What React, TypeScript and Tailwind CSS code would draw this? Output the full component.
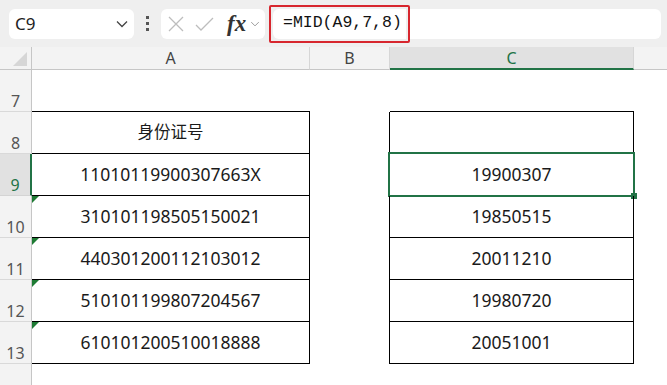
import type { ReactNode } from "react";

const ids = [
  "11010119900307663X",
  "310101198505150021",
  "440301200112103012",
  "510101199807204567",
  "610101200510018888",
];
const dates = ["19900307", "19850515", "20011210", "19980720", "20051001"];

const font = "font-['Noto_Sans','Noto_Sans_CJK_SC',sans-serif]";

function Chevron({ className }: { className?: string }) {
  return (
    <svg width="12" height="8" viewBox="0 0 12 8" className={className}>
      <polyline points="1,1.5 6,6.5 11,1.5" fill="none" stroke="currentColor" strokeWidth="1.3" />
    </svg>
  );
}

function RowHead({ n, active }: { n: number; active?: boolean }) {
  return (
    <div
      className={`flex h-[42px] items-end justify-center border-b border-r pb-[2px] text-[16px] leading-none ${
        active
          ? "border-b-[#d4d4d4] border-r-2 border-r-[#217346] bg-[#e1e1e1] text-[#217346]"
          : "border-b-[#d9d9d9] border-r-[#c6c6c6] bg-[#f3f3f3] text-[#555]"
      }`}
    >
      {n}
    </div>
  );
}

function Cell({
  children,
  boxed,
  right,
  flag,
}: {
  children?: ReactNode;
  boxed?: boolean;
  right?: boolean;
  flag?: boolean;
}) {
  return (
    <div
      className={`relative flex h-[42px] items-center justify-center text-[17.5px] text-[#1a1a1a] ${
        boxed ? "border-b border-black" : ""
      } ${right ? "border-r border-black" : ""}`}
    >
      {/* error indicator */}
      {flag && (
        <span className="absolute left-0 top-0 h-0 w-0 border-r-[7px] border-t-[7px] border-r-transparent border-t-[#1e7b34]" />
      )}
      {children}
    </div>
  );
}

export default function App() {
  return (
    <div className={`h-[385px] w-[667px] overflow-hidden bg-white ${font}`}>
      {/* formula bar */}
      <div className="flex h-[47px] items-center bg-[#efefef] pl-[9px]">
        <div className="flex h-[30px] w-[125px] items-center justify-between rounded-[6px] bg-white pl-[6px] pr-[6px] text-[17px] text-[#222]">
          <span>C9</span>
          <Chevron className="text-[#444]" />
        </div>
        <div className="ml-[10px] flex w-[6px] flex-col items-center gap-[3px]">
          <span className="h-[3px] w-[3px] bg-[#555]" />
          <span className="h-[3px] w-[3px] bg-[#555]" />
          <span className="h-[3px] w-[3px] bg-[#555]" />
        </div>
        <div className="ml-[11px] flex h-[30px] w-[104px] items-center rounded-[6px] bg-white pl-[7px]">
          <svg width="16" height="16" viewBox="0 0 16 16" className="text-[#bdbdbd]">
            <path d="M1 1L15 15M15 1L1 15" stroke="currentColor" strokeWidth="1.3" />
          </svg>
          <svg width="19" height="16" viewBox="0 0 19 16" className="ml-[11px] text-[#bdbdbd]">
            <path d="M1 9L6 14L18 2" fill="none" stroke="currentColor" strokeWidth="1.3" />
          </svg>
          <span className="ml-[13px] font-['Liberation_Serif',serif] text-[23px] font-bold italic leading-none text-[#333]">
            fx
          </span>
          <Chevron className="ml-[3px] scale-75 text-[#999]" />
        </div>
        <div className="ml-[4px] flex h-[38px] w-[141px] items-center rounded-[2px] border-2 border-[#d7262e] px-[2px]">
          <div className="flex h-[30px] flex-1 items-center rounded-l-[6px] bg-white pl-[10px] font-['Liberation_Mono',monospace] text-[16.5px] text-[#111]">
            =MID(A9,7,8)
          </div>
        </div>
        <div className="h-[30px] flex-1 rounded-r-[6px] bg-white" />
        <div className="w-[6px]" />
      </div>

      {/* sheet */}
      <div className="grid grid-cols-[32px_278px_80px_244px_1fr]">
        {/* column headers */}
        <div className="relative h-[23px] border-b border-r border-[#c6c6c6] bg-[#f3f3f3]">
          <svg width="14" height="14" viewBox="0 0 14 14" className="absolute right-[4px] bottom-[3px]">
            <polygon points="14,0 14,14 0,14" fill="#d6d6d6" />
          </svg>
        </div>
        <div className="flex h-[23px] items-center justify-center border-b border-r border-b-[#c6c6c6] border-r-[#d6d6d6] bg-[#f3f3f3] text-[16px] text-[#444]">
          A
        </div>
        <div className="flex h-[23px] items-center justify-center border-b border-r border-b-[#c6c6c6] border-r-[#d6d6d6] bg-[#f3f3f3] text-[16px] text-[#444]">
          B
        </div>
        <div className="flex h-[23px] items-center justify-center border-b-2 border-r border-b-[#217346] border-r-[#d6d6d6] bg-[#e1e1e1] text-[16px] text-[#217346]">
          C
        </div>
        <div className="h-[23px] border-b border-[#c6c6c6] bg-[#f3f3f3]" />

        {/* row 7 */}
        <RowHead n={7} />
        <Cell boxed />
        <Cell />
        <Cell boxed />
        <Cell />

        {/* row 8 */}
        <RowHead n={8} />
        <Cell boxed right>
          <span className="text-[16.5px]">身份证号</span>
        </Cell>
        <Cell right />
        <Cell boxed right />
        <Cell />

        {ids.map((id, i) => (
          <div key={id} className="contents">
            <RowHead n={9 + i} active={i === 0} />
            <Cell boxed right flag={i > 0}>
              {id}
            </Cell>
            <Cell right />
            <Cell boxed right>
              {dates[i]}
              {i === 0 && (
                <>
                  <span className="absolute -left-[2px] -right-[2px] -top-[2px] -bottom-[2px] border-2 border-[#217346]" />
                  <span className="absolute -bottom-[4px] -right-[4px] h-[6px] w-[6px] bg-[#217346]" />
                </>
              )}
            </Cell>
            <Cell />
          </div>
        ))}

        {/* row 14 */}
        <div className="h-[30px] border-r border-[#c6c6c6] bg-[#f3f3f3]" />
        <div />
        <div />
        <div />
        <div />
      </div>
    </div>
  );
}
